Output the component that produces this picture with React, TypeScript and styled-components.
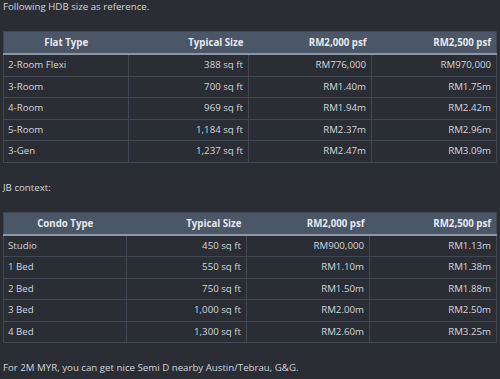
import styled, { createGlobalStyle } from 'styled-components';

const GlobalStyle = createGlobalStyle`
  html, body {
    margin: 0;
    padding: 0;
    background: #2a2d34;
  }
`;

const Page = styled.div`
  width: 500px;
  height: 379px;
  overflow: hidden;
  box-sizing: border-box;
  padding: 0 4px 0 3px;
  background: #2a2d34;
  color: #d3d7dd;
  font-family: 'Open Sans', 'Noto Sans', sans-serif;
  font-size: 9.7px;
`;

const Para = styled.p<{ $first?: boolean }>`
  margin: ${(p) => (p.$first ? '-2px' : '16px')} 0 0 0;
  line-height: 18px;
`;

const Table = styled.table`
  width: 493px;
  margin-top: 15px;
  border-collapse: collapse;
  table-layout: fixed;
  border: 1px solid #414853;

  th {
    background: #4b5666;
    color: #e6e9ee;
    font-weight: 700;
    text-align: right;
    padding: 2px 5px;
    line-height: 17px;
    border-bottom: 2px solid #8b97a7;

    &:first-child {
      text-align: center;
    }
  }

  td {
    padding: 3px 5px 3px 4px;
    line-height: 14.5px;
    text-align: right;
    border: 1px solid #414853;
    white-space: nowrap;

    &:first-child {
      text-align: left;
    }
  }
`;

type Row = [string, string, string, string];

const hdb: Row[] = [
  ['2-Room Flexi', '388 sq ft', 'RM776,000', 'RM970,000'],
  ['3-Room', '700 sq ft', 'RM1.40m', 'RM1.75m'],
  ['4-Room', '969 sq ft', 'RM1.94m', 'RM2.42m'],
  ['5-Room', '1,184 sq ft', 'RM2.37m', 'RM2.96m'],
  ['3-Gen', '1,237 sq ft', 'RM2.47m', 'RM3.09m'],
];

const condo: Row[] = [
  ['Studio', '450 sq ft', 'RM900,000', 'RM1.13m'],
  ['1 Bed', '550 sq ft', 'RM1.10m', 'RM1.38m'],
  ['2 Bed', '750 sq ft', 'RM1.50m', 'RM1.88m'],
  ['3 Bed', '1,000 sq ft', 'RM2.00m', 'RM2.50m'],
  ['4 Bed', '1,300 sq ft', 'RM2.60m', 'RM3.25m'],
];

function PriceTable({ head, rows, widths }: { head: string; rows: Row[]; widths: number[] }) {
  return (
    <Table>
      <colgroup>
        {widths.map((w, i) => (
          <col key={i} style={{ width: w }} />
        ))}
      </colgroup>
      <thead>
        <tr>
          <th>{head}</th>
          <th>Typical Size</th>
          <th>RM2,000 psf</th>
          <th>RM2,500 psf</th>
        </tr>
      </thead>
      <tbody>
        {rows.map((r) => (
          <tr key={r[0]}>
            {r.map((c, i) => (
              <td key={i}>{c}</td>
            ))}
          </tr>
        ))}
      </tbody>
    </Table>
  );
}

export default function App() {
  return (
    <>
      <GlobalStyle />
      <Page>
        <Para $first>Following HDB size as reference.</Para>
        <PriceTable head="Flat Type" rows={hdb} widths={[125, 120, 123, 125]} />
        <Para>JB context:</Para>
        <PriceTable head="Condo Type" rows={condo} widths={[123, 120, 123, 127]} />
        <Para>For 2M MYR, you can get nice Semi D nearby Austin/Tebrau, G&amp;G.</Para>
      </Page>
    </>
  );
}
